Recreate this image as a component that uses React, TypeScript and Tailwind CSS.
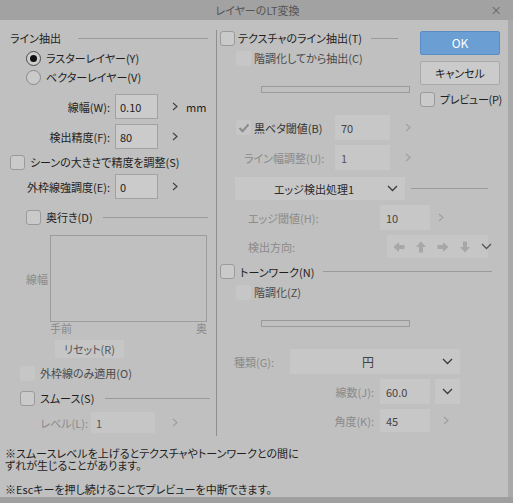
import React from "react";

const Chev = ({ c = "#444" }: { c?: string }) => (
  <svg width="6" height="9" viewBox="0 0 6 9" className="shrink-0">
    <path d="M1 1 L5 4.5 L1 8" fill="none" stroke={c} strokeWidth="1.2" />
  </svg>
);

const Down = ({ c = "#3a3a3a" }: { c?: string }) => (
  <svg width="11" height="7" viewBox="0 0 11 7" className="shrink-0">
    <path d="M1 1 L5.5 5.5 L10 1" fill="none" stroke={c} strokeWidth="1.3" />
  </svg>
);

const Box = ({ disabled = false, checked = false }: { disabled?: boolean; checked?: boolean }) => (
  <span
    className={
      disabled
        ? "w-[15px] h-[15px] shrink-0 rounded-[3px] bg-[#c6c6c6] flex items-center justify-center"
        : "w-[15px] h-[15px] shrink-0 rounded-[3px] bg-[#cacaca] border border-[#9a9a9a] flex items-center justify-center"
    }
  >
    {checked && (
      <svg width="12" height="10" viewBox="0 0 12 10">
        <path d="M1.5 5 L4.5 8.2 L10.5 1.5" fill="none" stroke="#8c8c8c" strokeWidth="2" />
      </svg>
    )}
  </span>
);

const Radio = ({ on = false }: { on?: boolean }) => (
  <span
    className={
      on
        ? "w-[15px] h-[15px] shrink-0 rounded-full border border-[#4a4a4a] bg-[#cecece] flex items-center justify-center"
        : "w-[15px] h-[15px] shrink-0 rounded-full border border-[#8a8a8a] bg-[#cacaca]"
    }
  >
    {on && <span className="w-[7px] h-[7px] rounded-full bg-[#111]" />}
  </span>
);

const Line = ({ cls }: { cls: string }) => <span className={"h-px bg-[#9a9a9a] " + cls} />;

const Arrow = ({ dir }: { dir: "l" | "u" | "r" | "d" }) => {
  const rot = { l: 0, u: 90, r: 180, d: 270 }[dir];
  return (
    <svg width="12" height="12" viewBox="0 0 12 12" className="shrink-0">
      <g transform={`rotate(${rot} 6 6)`}>
        <path d="M0.5 6 L6 1 L6 4 L11.5 4 L11.5 8 L6 8 L6 11 Z" fill="#a7a7a7" />
      </g>
    </svg>
  );
};

export default function App() {
  return (
    <div className="w-[513px] h-[503px] bg-[#c0c0c0] flex flex-col overflow-hidden font-['Noto_Sans_CJK_JP','Liberation_Sans',sans-serif] text-[11px] leading-[14px] text-[#1e1e1e] whitespace-nowrap [font-feature-settings:'palt']">
      {/* title */}
      <div className="h-[20px] shrink-0 bg-[#a2a2a2] grid grid-cols-[1fr_auto_1fr] items-center">
        <span />
        <span className="text-[#555] text-[11px] pl-[2px]">レイヤーのLT変換</span>
        <span className="justify-self-end pr-[11px] text-[#5a5a5a] text-[14px] leading-[14px] [font-feature-settings:normal] font-['DejaVu_Sans',sans-serif] font-light">×</span>
      </div>

      <div className="flex-1 flex flex-col border-r-[5px] border-[#a9a9a9]">
        <div className="flex h-[416px] shrink-0">
          {/* left column */}
          <div className="w-[216px] shrink-0 flex flex-col">
            <div className="mt-[10px] h-[16px] flex items-center pl-[10px]">
              <span>ライン抽出</span>
              <Line cls="flex-1 ml-[17px] mr-[8px]" />
            </div>
            <div className="mt-[4px] h-[16px] flex items-center pl-[26px] gap-[5px]">
              <Radio on />
              <span>ラスターレイヤー(Y)</span>
            </div>
            <div className="mt-[3px] h-[16px] flex items-center pl-[26px] gap-[5px]">
              <Radio />
              <span>ベクターレイヤー(V)</span>
            </div>
            <div className="mt-[9px] h-[25px] flex items-center">
              <span className="w-[115px] pr-[5px] text-right">線幅(W):</span>
              <span className="w-[43px] h-full bg-[#cbcbcb] border border-[#a2a2a2] pl-[4px] flex items-center">0.10</span>
              <span className="ml-[14px]"><Chev /></span>
              <span className="ml-[8px]">mm</span>
            </div>
            <div className="mt-[5px] h-[25px] flex items-center">
              <span className="w-[115px] pr-[5px] text-right">検出精度(F):</span>
              <span className="w-[43px] h-full bg-[#cbcbcb] border border-[#a2a2a2] pl-[4px] flex items-center">80</span>
              <span className="ml-[14px]"><Chev /></span>
            </div>
            <div className="mt-[5px] h-[16px] flex items-center pl-[10px] gap-[5px]">
              <Box />
              <span>シーンの大きさで精度を調整(S)</span>
            </div>
            <div className="mt-[4px] h-[25px] flex items-center">
              <span className="w-[115px] pr-[5px] text-right">外枠線強調度(E):</span>
              <span className="w-[43px] h-full bg-[#cbcbcb] border border-[#a2a2a2] pl-[4px] flex items-center">0</span>
              <span className="ml-[14px]"><Chev /></span>
            </div>
            <div className="mt-[10px] h-[16px] flex items-center pl-[26px] gap-[5px]">
              <Box />
              <span>奥行き(D)</span>
              <Line cls="flex-1 ml-[5px] mr-[8px]" />
            </div>
            <div className="mt-[10px] h-[87px] flex items-center">
              <span className="w-[50px] pl-[26px] text-[#8a8a8a]">線幅</span>
              <span className="w-[157px] h-full border border-[#9c9c9c]" />
            </div>
            <div className="h-[12px] ml-[50px] w-[157px] flex justify-between items-center text-[#8a8a8a] leading-[12px]">
              <span>手前</span>
              <span>奥</span>
            </div>
            <div className="mt-[6px] ml-[55px] w-[69px] h-[18px] bg-[#c6c6c6] text-[#555] flex items-center justify-center">
              リセット(R)
            </div>
            <div className="mt-[7px] h-[16px] flex items-center pl-[20px] gap-[5px]">
              <Box disabled />
              <span className="text-[#4a4a4a]">外枠線のみ適用(O)</span>
            </div>
            <div className="mt-[9px] h-[16px] flex items-center pl-[20px] gap-[5px]">
              <Box />
              <span>スムース(S)</span>
              <Line cls="flex-1 ml-[6px] mr-[6px]" />
            </div>
            <div className="mt-[6px] h-[21px] flex items-center">
              <span className="w-[88px] text-right text-[#8a8a8a]">レベル(L):</span>
              <span className="ml-[3px] w-[64px] h-full bg-[#c6c6c6] text-[#555] pl-[5px] flex items-center">1</span>
              <span className="ml-[17px]"><Chev c="#a0a0a0" /></span>
            </div>
          </div>

          {/* separator */}
          <div className="w-px bg-[#8f8f8f] mt-[10px] h-[406px] shrink-0" />

          {/* right column */}
          <div className="flex-1 flex flex-col">
            <div className="flex items-start">
              <div className="w-[196px] shrink-0 flex flex-col">
                <div className="mt-[10px] h-[16px] flex items-center pl-[3px] gap-[3px]">
                  <Box />
                  <span>テクスチャのライン抽出(T)</span>
                  <Line cls="flex-1 ml-[6px] mr-[15px]" />
                </div>
                <div className="mt-[4px] h-[16px] flex items-center pl-[19px] gap-[3px]">
                  <Box disabled />
                  <span className="text-[#4a4a4a]">階調化してから抽出(C)</span>
                </div>
                <div className="mt-[20px] ml-[44px] w-[149px] h-[7px] border border-[#9a9a9a]" />
              </div>
              <div className="ml-[7px] w-[80px] flex flex-col">
                <div className="mt-[11px] h-[24px] rounded-[2px] bg-[#6b9ed3] border border-[#5b8dc4] text-white text-[12px] flex items-center justify-center">OK</div>
                <div className="mt-[6px] h-[24px] rounded-[2px] bg-[#cbcbcb] border border-[#a9a9a9] flex items-center justify-center">キャンセル</div>
                <div className="mt-[6px] h-[16px] flex items-center gap-[5px]">
                  <Box />
                  <span className="tracking-[-0.3px]">プレビュー(P)</span>
                </div>
              </div>
            </div>

            <div className="mt-[8px] h-[25px] flex items-center">
              <span className="w-[118px] pl-[19px] flex items-center gap-[3px]">
                <Box disabled checked />
                <span className="text-[#333]">黒ベタ閾値(B)</span>
              </span>
              <span className="w-[55px] h-full bg-[#c7c7c7] text-[#444] pl-[6px] flex items-center">70</span>
              <span className="ml-[15px]"><Chev c="#a0a0a0" /></span>
            </div>
            <div className="mt-[5px] h-[25px] flex items-center">
              <span className="w-[118px] pl-[27px] text-[#8a8a8a]">ライン幅調整(U):</span>
              <span className="w-[55px] h-full bg-[#c7c7c7] text-[#555] pl-[6px] flex items-center">1</span>
              <span className="ml-[15px]"><Chev c="#a0a0a0" /></span>
            </div>
            <div className="mt-[7px] h-[23px] flex items-center">
              <span className="ml-[18px] w-[170px] h-full bg-[#c7c7c7] flex items-center">
                <span className="flex-1 text-center text-[#2a2a2a] pl-[6px]">エッジ検出処理1</span>
                <span className="mr-[7px]"><Down /></span>
              </span>
              <Line cls="ml-[6px] w-[77px]" />
            </div>
            <div className="mt-[5px] h-[25px] flex items-center">
              <span className="w-[163px] pl-[31px] text-[#8a8a8a]">エッジ閾値(H):</span>
              <span className="w-[50px] h-full bg-[#c7c7c7] text-[#444] pl-[6px] flex items-center">10</span>
              <span className="ml-[8px]"><Chev c="#a0a0a0" /></span>
            </div>
            <div className="mt-[5px] h-[23px] flex items-center">
              <span className="w-[170px] pl-[31px] text-[#8a8a8a]">検出方向:</span>
              <span className="w-[101px] h-full bg-[#c6c6c6] flex items-center pl-[6px] gap-[10px]">
                <Arrow dir="l" />
                <Arrow dir="u" />
                <Arrow dir="r" />
                <Arrow dir="d" />
                <Down c="#555" />
              </span>
            </div>
            <div className="mt-[5px] h-[17px] flex items-center pl-[3px] gap-[5px]">
              <Box />
              <span>トーンワーク(N)</span>
              <Line cls="flex-1 ml-[4px] mr-[16px]" />
            </div>
            <div className="mt-[4px] h-[16px] flex items-center pl-[19px] gap-[3px]">
              <Box disabled />
              <span className="text-[#4a4a4a]">階調化(Z)</span>
            </div>
            <div className="mt-[20px] ml-[44px] w-[149px] h-[7px] border border-[#9a9a9a]" />
            <div className="mt-[22px] h-[25px] flex items-center">
              <span className="w-[73px] pl-[17px] text-[#8a8a8a]">種類(G):</span>
              <span className="w-[170px] h-full bg-[#c7c7c7] flex items-center">
                <span className="flex-1 text-center text-[#444] text-[12px] pl-[4px]">円</span>
                <span className="mr-[7px]"><Down /></span>
              </span>
            </div>
            <div className="mt-[5px] h-[25px] flex items-center">
              <span className="w-[163px] pr-[6px] text-right text-[#8a8a8a]">線数(J):</span>
              <span className="w-[50px] h-full bg-[#c7c7c7] text-[#444] pl-[6px] flex items-center">60.0</span>
              <span className="ml-[5px] w-[25px] h-full bg-[#c7c7c7] flex items-center justify-center"><Down /></span>
            </div>
            <div className="mt-[5px] h-[23px] flex items-center">
              <span className="w-[163px] pr-[6px] text-right text-[#8a8a8a]">角度(K):</span>
              <span className="w-[50px] h-full bg-[#c7c7c7] text-[#444] pl-[6px] flex items-center">45</span>
              <span className="ml-[13px]"><Chev c="#a0a0a0" /></span>
            </div>
          </div>
        </div>

        {/* footer */}
        <div className="pl-[5px] pt-[11px] flex flex-col">
          <p className="leading-[12px]">
            ※スムースレベルを上げるとテクスチャやトーンワークとの間に
            <br />
            ずれが生じることがあります。
          </p>
          <p className="mt-[12px] leading-[12px]">※Escキーを押し続けることでプレビューを中断できます。</p>
        </div>
      </div>
      <div className="h-[6px] shrink-0 bg-[#9f9f9f]" />
    </div>
  );
}
